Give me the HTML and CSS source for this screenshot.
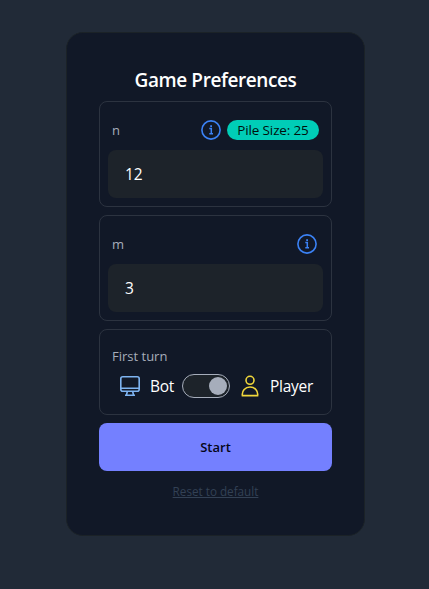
FILE: index.html
```html
<!DOCTYPE html>
<html lang="en">
<head>
<meta charset="utf-8">
<title>Game Preferences</title>
<link rel="stylesheet" href="styles.css">
</head>
<body>
<main class="card">
  <h1 class="title">Game Preferences</h1>
  <section class="field">
    <div class="label-row">
      <label class="label" for="n">n</label>
      <div class="extras">
        <svg class="info" viewBox="0 0 20 20"><circle cx="10" cy="10" r="9.1"/><path d="M8.300 8.600h2v5M8.300 13.700h3.700"/><path class="dot" d="M9.200 5.300h1.800v1.800H9.200z"/></svg>
        <span class="badge">Pile Size: 25</span>
      </div>
    </div>
    <input class="input" id="n" type="text" value="12">
  </section>
  <section class="field">
    <div class="label-row">
      <label class="label" for="m">m</label>
      <div class="extras extras-single">
        <svg class="info" viewBox="0 0 20 20"><circle cx="10" cy="10" r="9.1"/><path d="M8.300 8.600h2v5M8.300 13.700h3.700"/><path class="dot" d="M9.200 5.300h1.800v1.800H9.200z"/></svg>
      </div>
    </div>
    <input class="input" id="m" type="text" value="3">
  </section>
  <section class="field field-turn">
    <div class="label-row label-row-turn"><span class="label">First turn</span></div>
    <div class="turn">
      <svg class="bot-icon" viewBox="0 0 20 20"><rect x=".8" y=".8" width="18.400" height="14.400" rx="2"/><path d="M.8 12.200h18.400M7.300 15.500l-.8 3.500M12.700 15.500l.8 3.500M5 19.200h10"/></svg>
      <span class="bot">Bot</span>
      <span class="toggle" role="switch" aria-checked="true"><span class="knob"></span></span>
      <svg class="player-icon" viewBox="0 0 18 22"><circle cx="9" cy="5.300" r="4"/><path d="M1.400 20.600c-.8-5 3-8.600 7.600-8.600s8.400 3.600 7.600 8.600z"/></svg>
      <span class="player">Player</span>
    </div>
  </section>
  <button class="start">Start</button>
  <a class="reset" href="#">Reset to default</a>
</main>
</body>
</html>
```
FILE: styles.css
```css
* { box-sizing: border-box; }
body {
  margin: 0;
  height: 589px;
  padding: 32px 0 0 66px;
  overflow: hidden;
  background: #212a37;
  font-family: "Open Sans", "Noto Sans", sans-serif;
  color: #fff;
}
.card {
  width: 299px;
  height: 504px;
  padding: 32px;
  border: 1px solid #1b2227;
  border-radius: 17px;
  background: #111827;
  display: flex;
  flex-direction: column;
  gap: 8px;
}
.title {
  margin: 0;
  height: 28px;
  font-size: 19px;
  line-height: 30px;
  font-weight: 650;
  text-align: center;
  white-space: nowrap;
  letter-spacing: -.4px;
}
.field {
  width: 233px;
  padding: 8px;
  border: 1px solid #2c3340;
  border-radius: 8px;
}
.field-turn { padding-bottom: 16px; }
.label-row {
  height: 40px;
  padding: 0 4px;
  display: flex;
  align-items: center;
  justify-content: space-between;
}
.label-row-turn { height: 36px; }
.label { font-size: 13px; color: #a6adbb; }
.extras { display: flex; align-items: center; gap: 6px; }
.extras-single { padding-right: 2px; }
.info { width: 20px; height: 20px; fill: none; stroke: #3b82f6; stroke-width: 1.6; }
.info path { stroke-width: 1.5; }
.info .dot { fill: #3b82f6; stroke: none; }
.badge {
  width: 92px;
  height: 20px;
  border-radius: 10px;
  background: #00cdb7;
  color: #00100d;
  font-size: 13.5px;
  letter-spacing: -.15px;
  line-height: 20px;
  text-align: center;
  white-space: nowrap;
}
.input {
  display: block;
  width: 215px;
  height: 48px;
  padding: 0 17px;
  border: 0;
  border-radius: 8px;
  background: #1d232a;
  color: #fff;
  font: 15.5px "Open Sans", sans-serif;
}
.turn {
  display: flex;
  align-items: center;
  height: 24px;
  padding-left: 12px;
  font-size: 15.5px;
  letter-spacing: -.25px;
  white-space: nowrap;
}
.bot-icon { width: 20px; height: 20px; fill: none; stroke: #7eb3f0; stroke-width: 1.6; }
.bot { width: 32px; margin-left: 10px; }
.toggle {
  width: 48px;
  height: 24px;
  padding: 2px;
  border: 1px solid #a6adbb;
  border-radius: 12px;
  background: #1d232a;
  display: flex;
  justify-content: flex-end;
}
.knob { width: 18px; height: 18px; border-radius: 50%; background: #a6adbb; }
.player-icon { width: 18px; height: 22px; margin-left: 11px; fill: none; stroke: #f0d73c; stroke-width: 1.6; }
.player { margin-left: 11px; }
.start {
  height: 48px;
  flex: none;
  border: 0;
  border-radius: 8px;
  background: #7480ff;
  color: #050617;
  font: 550 13px "Open Sans", sans-serif;
}
.reset {
  margin-top: 4px;
  align-self: center;
  color: #334155;
  font-size: 11.7px;
  line-height: 16px;
  text-decoration: underline;
}
```
